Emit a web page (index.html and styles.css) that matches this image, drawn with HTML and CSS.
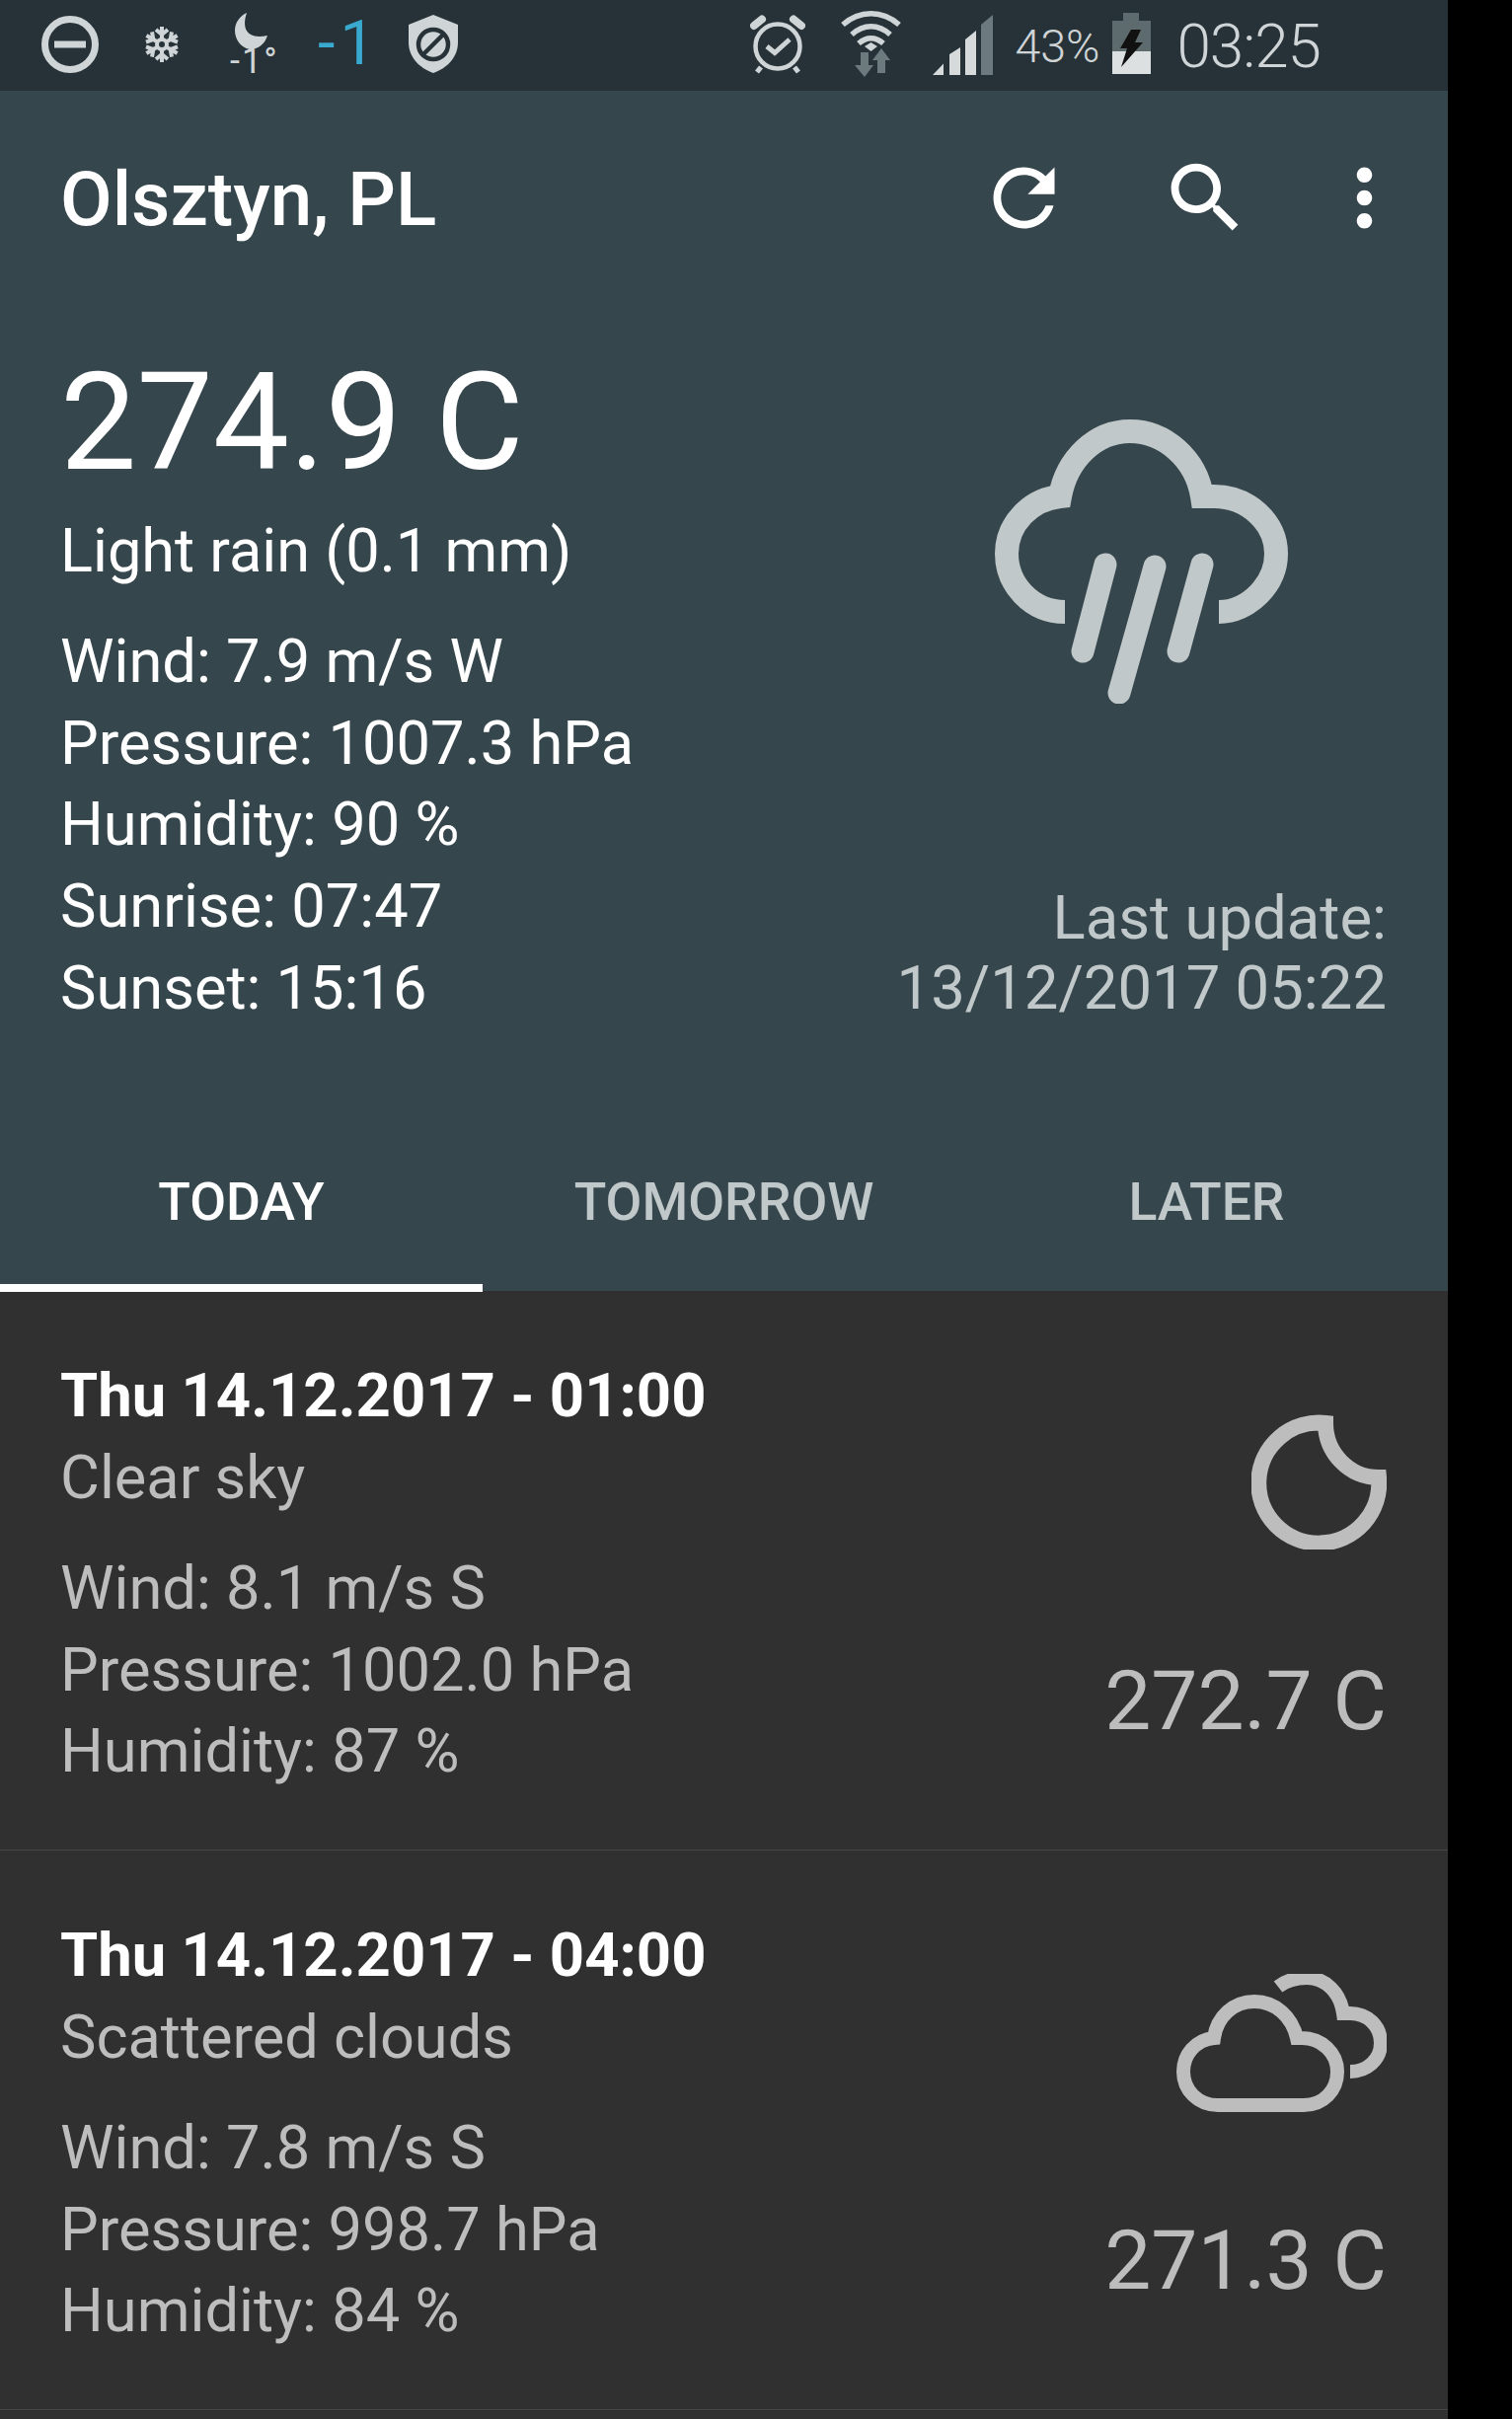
FILE: index.html
```html
<!DOCTYPE html>
<html lang="en">
<head>
    <meta charset="UTF-8">
    <meta name="viewport" content="width=device-width, initial-scale=1.0">
    <title>Weather - Olsztyn, PL</title>
    <link rel="stylesheet" href="styles.css">
</head>
<body>
    <div class="app">
        <div class="status-bar">
            <div class="status-left">
                <svg class="st-dnd" viewBox="0 0 58 58"><circle cx="29" cy="29" r="25.500" fill="none" stroke="#cfd4d6" stroke-width="7"/><rect x="13" y="25.500" width="32" height="7" fill="#cfd4d6"/></svg>
                <svg class="st-snow" viewBox="-19 -19 38 38" fill="none" stroke="#cfd4d6" stroke-width="4">
                    <g id="arm"><path d="M0 -5V-18M-6 -15L0 -10L6 -15"/></g>
                    <use href="#arm" transform="rotate(60)"/>
                    <use href="#arm" transform="rotate(120)"/>
                    <use href="#arm" transform="rotate(180)"/>
                    <use href="#arm" transform="rotate(240)"/>
                    <use href="#arm" transform="rotate(300)"/>
                    <circle r="5"/>
                </svg>
                <div class="st-moon">
                    <svg class="st-moon-icon" viewBox="0 0 33 37"><path d="M12 0C6 18 14 27 33 23C30 33 22 37 15 37C5 35 0 26 0 18C0 10 5 3 12 0Z" fill="#cfd4d6"/></svg>
                    <span class="st-moon-temp">-1°</span>
                </div>
                <span class="st-level">-1</span>
                <svg class="st-shield" viewBox="0 0 50 59"><path d="M25 0L50 10V28C50 43 39 54 25 59C11 54 0 43 0 28V10Z" fill="#cfd4d6"/><circle cx="25" cy="30" r="15" fill="none" stroke="#263238" stroke-width="4.500"/><path d="M15 40L35 20" stroke="#263238" stroke-width="4.500"/></svg>
            </div>
            <div class="status-right">
                <svg class="st-alarm" viewBox="0 0 56 60" fill="none" stroke="#cfd4d6">
                    <circle cx="28" cy="32" r="22.500" stroke-width="4.500"/>
                    <path d="M17 32L25 38.500L40 25" stroke-width="5"/>
                    <path d="M4 11L12 4.500M52 11L44 4.500" stroke-width="8" stroke-linecap="round"/>
                    <path d="M11 53L7 58M45 53L49 58" stroke-width="5"/>
                </svg>
                <svg class="st-wifi" viewBox="0 0 63 67" fill="none" stroke="#cfd4d6" stroke-width="5.500">
                    <path d="M3 14C20 -1 43 -1 60 14"/>
                    <path d="M12 24C24 13 39 13 51 24"/>
                    <path d="M19 33C27 26 36 26 44 33"/>
                    <path d="M25 36L31.500 32L38 36L31.500 41Z" fill="#cfd4d6" stroke="none"/>
                    <path d="M21 42H29V55H34L25 67L15 55H21Z" fill="#6d7a7d" stroke="none"/>
                    <path d="M38 63H46V50H51L42 38L33 50H38Z" fill="#6d7a7d" stroke="none"/>
                </svg>
                <svg class="st-signal" viewBox="0 0 61 61"><path d="M0 61L11 49.500V61ZM17 61V40L28 33V61ZM33 61V25L44 16V61Z" fill="#d6dadb"/><path d="M49 61V10L61 0V61Z" fill="#6d7a7d"/></svg>
                <span class="st-pct">43%</span>
                <svg class="st-battery" viewBox="0 0 39 62"><path d="M11 0H27V8H39V62H0V8H11Z" fill="#5d6b6f"/><rect y="39" width="39" height="23" fill="#dde0e0"/><path d="M19 17H29L23 30H31L9 55L15 36H8Z" fill="#111"/></svg>
                <span class="st-time">03:25</span>
            </div>
        </div>

        <div class="weather-head">
            <div class="toolbar">
                <h1 class="city">Olsztyn, PL</h1>
                <div class="toolbar-actions">
                    <svg class="tb-refresh" viewBox="0 0 24 24"><path d="M17.650 6.350C16.200 4.900 14.210 4 12 4c-4.420 0-7.990 3.580-7.990 8s3.570 8 7.990 8c3.730 0 6.840-2.550 7.730-6h-2.080c-.82 2.330-3.040 4-5.650 4-3.310 0-6-2.690-6-6s2.690-6 6-6c1.660 0 3.140.69 4.220 1.780L13 11h7V4l-2.350 2.350z"/></svg>
                    <svg class="tb-search" viewBox="0 0 24 24"><path d="M15.500 14h-.79l-.28-.27C15.410 12.590 16 11.110 16 9.500 16 5.910 13.090 3 9.500 3S3 5.910 3 9.500 5.910 16 9.500 16c1.610 0 3.090-.59 4.230-1.570l.27.28v.79l5 4.990L20.490 19l-4.990-5zm-6 0C7.010 14 5 11.990 5 9.500S7.010 5 9.500 5 14 7.010 14 9.500 11.990 14 9.500 14z"/></svg>
                    <svg class="tb-more" viewBox="0 0 24 24"><path d="M12 8c1.100 0 2-.9 2-2s-.9-2-2-2-2 .9-2 2 .9 2 2 2zm0 2c-1.100 0-2 .9-2 2s.9 2 2 2 2-.9 2-2-.9-2-2-2zm0 6c-1.100 0-2 .9-2 2s.9 2 2 2 2-.9 2-2-.9-2-2-2z"/></svg>
                </div>
            </div>

            <div class="summary">
                <div class="summary-left">
                    <div class="temp-now">274.9 C</div>
                    <div class="desc-now">Light rain (0.1 mm)</div>
                    <div class="details details-now">
                        <div>Wind: 7.9 m/s W</div>
                        <div>Pressure: 1007.3 hPa</div>
                        <div>Humidity: 90 %</div>
                        <div>Sunrise: 07:47</div>
                        <div>Sunset: 15:16</div>
                    </div>
                </div>
                <div class="summary-right">
                    <svg class="rain-icon" viewBox="48 285 298 288">
                        <path d="M119 480C85 480 60 452 60 421C60 390 85 366 114 363C121 325 150 297 185 297C220 297 252 325 258 363H270C305 363 333 390 333 421C333 452 305 480 275 480" fill="none" stroke="#c0c8ca" stroke-width="24"/>
                        <path d="M160 432L137 520M210 434L174 562M258 432L234 520" fill="none" stroke="#c0c8ca" stroke-width="23" stroke-linecap="round"/>
                    </svg>
                    <div class="last-update">Last update:<br>13/12/2017 05:22</div>
                </div>
            </div>

            <div class="tabs">
                <div class="tab tab-active">TODAY</div>
                <div class="tab">TOMORROW</div>
                <div class="tab">LATER</div>
            </div>
        </div>

        <div class="forecast">
            <div class="forecast-row">
                <div class="row-left">
                    <div class="row-date">Thu 14.12.2017 - 01:00</div>
                    <div class="row-desc">Clear sky</div>
                    <div class="details row-details">
                        <div>Wind: 8.1 m/s S</div>
                        <div>Pressure: 1002.0 hPa</div>
                        <div>Humidity: 87 %</div>
                    </div>
                </div>
                <div class="row-right">
                    <svg class="moon-icon" viewBox="119 33 137 137"><path d="M194 42C194 72 218 97 248 97A61 61 0 1 1 194 42Z" fill="none" stroke="#bdbdbd" stroke-width="16"/></svg>
                    <div class="row-temp">272.7 C</div>
                </div>
            </div>
            <div class="forecast-row">
                <div class="row-left">
                    <div class="row-date">Thu 14.12.2017 - 04:00</div>
                    <div class="row-desc">Scattered clouds</div>
                    <div class="details row-details">
                        <div>Wind: 7.8 m/s S</div>
                        <div>Pressure: 998.7 hPa</div>
                        <div>Humidity: 84 %</div>
                    </div>
                </div>
                <div class="row-right">
                    <svg class="clouds-icon" viewBox="43 599 213 140" fill="none" stroke="#bdbdbd" stroke-width="14">
                        <path d="M85 732H172C192 732 206 717 206 698C206 679 190 664 170 664H165C160 642 143 627 122 627C101 627 84 642 81 664C62 666 50 681 50 698C50 717 65 732 85 732Z"/>
                        <path d="M146 612C155 605 165 603 175 603C194 603 209 618 212 639H219C237 639 250 652 250 669C250 686 236 698 219 698"/>
                    </svg>
                    <div class="row-temp">271.3 C</div>
                </div>
            </div>
        </div>
    </div>
</body>
</html>
```

FILE: styles.css
```css
html, body {
    margin: 0;
    padding: 0;
    height: 2451px;
    overflow: hidden;
    background: #000;
}

body {
    font-family: Roboto, "Noto Sans", sans-serif;
    color: #fff;
}

.app {
    width: 1467px;
    height: 2451px;
    background: #303030;
    overflow: hidden;
}

/* status bar */
.status-bar {
    height: 92px;
    background: #263238;
    display: flex;
    justify-content: space-between;
    align-items: flex-start;
    padding: 0 129px 0 42px;
    box-sizing: border-box;
    color: #cfd4d6;
    font-weight: 300;
}

.status-left,
.status-right {
    display: flex;
    align-items: flex-start;
}

.st-dnd {
    width: 58px;
    height: 58px;
    margin-top: 16px;
}

.st-snow {
    width: 38px;
    height: 38px;
    margin: 26px 0 0 45px;
}

.st-moon {
    width: 50px;
    margin: 13px 0 0 45px;
    display: flex;
    flex-direction: column;
    align-items: flex-start;
}

.st-moon-icon {
    width: 33px;
    height: 37px;
    display: block;
    margin-left: 10px;
}

.st-moon-temp {
    font-size: 36px;
    font-weight: 400;
    line-height: 26px;
    margin: -1px 0 0 5px;
    letter-spacing: 2px;
    white-space: nowrap;
}

.st-level {
    font-size: 63px;
    line-height: 62px;
    font-weight: 400;
    color: #39a9cf;
    margin: 13px 0 0 44px;
    letter-spacing: 5px;
}

.st-shield {
    width: 50px;
    height: 59px;
    margin: 15px 0 0 29px;
}

.st-alarm {
    width: 56px;
    height: 60px;
    margin-top: 15px;
}

.st-wifi {
    width: 63px;
    height: 67px;
    margin: 11px 0 0 35px;
}

.st-signal {
    width: 61px;
    height: 61px;
    margin: 15px 0 0 31px;
}

.st-pct {
    font-size: 46.500px;
    line-height: 44px;
    margin: 25px 0 0 22px;
}

.st-battery {
    width: 39px;
    height: 62px;
    margin: 13px 0 0 13px;
}

.st-time {
    font-size: 62px;
    line-height: 62px;
    margin: 16px 0 0 26px;
    letter-spacing: -1px;
}

/* current weather */
.weather-head {
    background: #36464d;
    height: 1216px;
    display: flex;
    flex-direction: column;
}

.toolbar {
    height: 216px;
    display: flex;
    justify-content: space-between;
    align-items: center;
    padding: 0 38px 0 61px;
    flex-shrink: 0;
}

.city {
    margin: 3px 0 0;
    font-size: 76.400px;
    font-weight: 500;
}

.toolbar-actions {
    display: flex;
    align-items: center;
    fill: #fff;
}

.toolbar-actions svg {
    width: 93px;
    height: 93px;
}

.tb-search {
    margin-left: 91px;
}

.tb-more {
    margin-left: 68px;
}

.summary {
    flex: 1;
    display: flex;
    justify-content: space-between;
    padding: 45px 62px 82px 61px;
}

.temp-now {
    font-size: 137.700px;
    line-height: 150px;
}

.desc-now {
    font-size: 61.300px;
    line-height: 83px;
    margin-top: 14px;
}

.details {
    font-size: 61.400px;
    line-height: 82.700px;
}

.details-now {
    margin-top: 29px;
}

.summary-right {
    display: flex;
    flex-direction: column;
    justify-content: space-between;
    align-items: center;
    padding: 72px 0 6px;
}

.rain-icon {
    width: 298px;
    height: 288px;
}

.last-update {
    font-size: 61.600px;
    line-height: 71px;
    text-align: right;
    color: #c0c8ca;
}

.tabs {
    height: 184px;
    display: flex;
    flex-shrink: 0;
}

.tab {
    flex: 1;
    text-align: center;
    font-size: 53.500px;
    font-weight: 500;
    line-height: 186px;
    color: #c0c8ca;
    box-sizing: border-box;
}

.tab-active {
    color: #fff;
    border-bottom: 8px solid #fff;
}

/* forecast list */
.forecast-row {
    display: flex;
    justify-content: space-between;
    height: 566px;
    padding: 0 62px 0 61px;
    border-bottom: 1px solid #474747;
    color: #bdbdbd;
}

.row-left {
    padding-top: 64px;
}

.row-date {
    font-size: 61.600px;
    font-weight: 700;
    line-height: 84px;
    color: #fff;
}

.row-desc {
    font-size: 61.300px;
    line-height: 83px;
}

.row-details {
    margin-top: 29px;
}

.row-right {
    display: flex;
    flex-direction: column;
    align-items: flex-end;
    justify-content: space-between;
    padding: 125px 0 101px;
    box-sizing: border-box;
}

.moon-icon {
    width: 137px;
    height: 137px;
}

.clouds-icon {
    width: 213px;
    height: 140px;
}

.row-temp {
    font-size: 83.800px;
    line-height: 100px;
}
```
